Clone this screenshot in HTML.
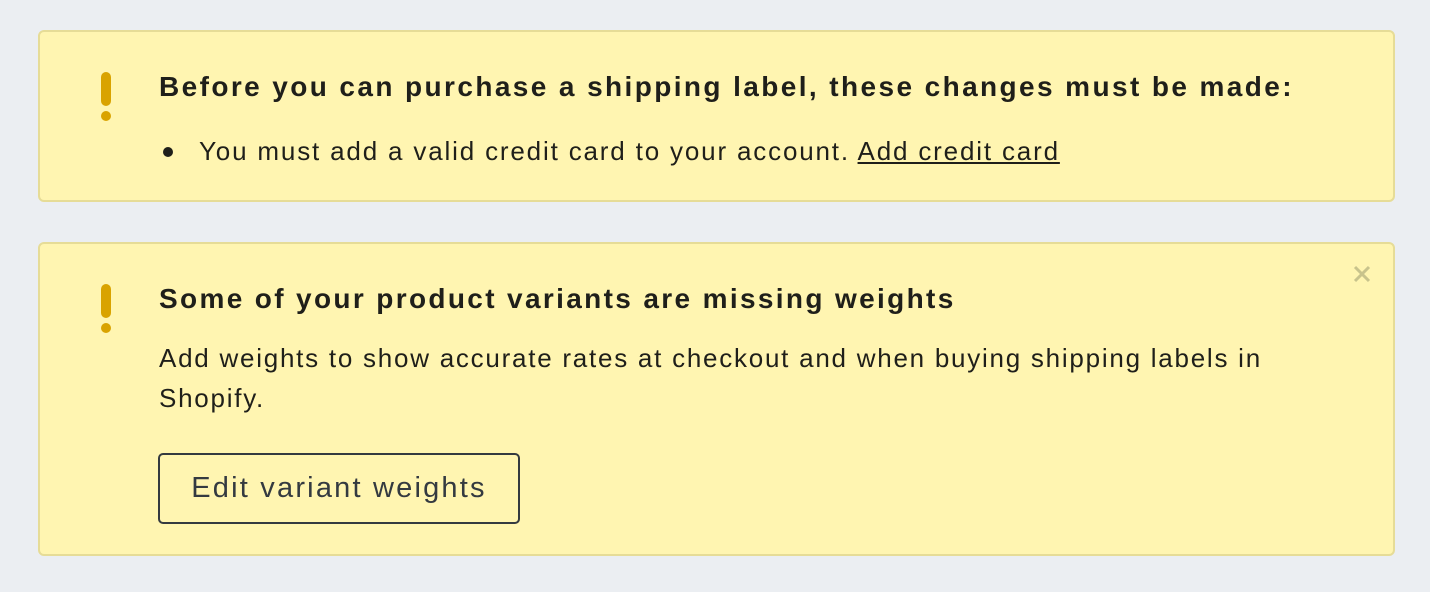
<!DOCTYPE html>
<html><head><style>
body{margin:0;width:1430px;height:592px;background:#ebeef2;font-family:"Liberation Sans",sans-serif;color:#212b36;position:relative;overflow:hidden}
.box{position:absolute;left:38px;width:1353px;background:#fff5b1;border:2px solid #e6dc97;border-radius:6px}
.ex{position:absolute;left:61px;width:10px}
.ex .bar{position:absolute;left:0;top:0;width:10px;height:34px;border-radius:5px;background:#d9a300}
.ex .dot{position:absolute;left:0;top:39px;width:10px;height:10px;border-radius:5px;background:#d9a300}
.t{position:absolute;white-space:nowrap}
</style></head><body>
<div class="box" style="top:30px;height:168px">
 <div class="ex" style="top:40px"><div class="bar"></div><div class="dot"></div></div>
 <div class="t" style="left:119px;top:39px;font-size:28px;font-weight:bold;color:#1f1f1a;letter-spacing:2.4px">Before you can purchase a shipping label, these changes must be made:</div>
 <div style="position:absolute;left:123px;top:115px;width:10px;height:10px;border-radius:5px;background:#1f1f1a"></div>
 <div class="t" style="left:159px;top:104px;font-size:26px;color:#1f1f1a;letter-spacing:1.83px">You must add a valid credit card to your account. <span style="text-decoration:underline">Add credit card</span></div>
</div>
<div class="box" style="top:242px;height:310px">
 <div class="ex" style="top:40px"><div class="bar"></div><div class="dot"></div></div>
 <svg style="position:absolute;left:1312px;top:20px" width="20" height="20" viewBox="0 0 20 20"><path d="M3 3L17 17M17 3L3 17" stroke="#c8c38c" stroke-width="3"/></svg>
 <div class="t" style="left:119px;top:39px;font-size:28px;font-weight:bold;color:#1f1f1a;letter-spacing:2.35px">Some of your product variants are missing weights</div>
 <div class="t" style="left:119px;top:94px;font-size:26px;line-height:40px;color:#1f1f1a;letter-spacing:1.75px">Add weights to show accurate rates at checkout and when buying shipping labels in<br>Shopify.</div>
 <div style="position:absolute;left:118px;top:209px;width:358px;height:67px;border:2px solid #343a40;border-radius:5px;text-align:center;line-height:67px;font-size:29px;color:#343a40;letter-spacing:2.2px">Edit variant weights</div>
</div>
</body></html>
